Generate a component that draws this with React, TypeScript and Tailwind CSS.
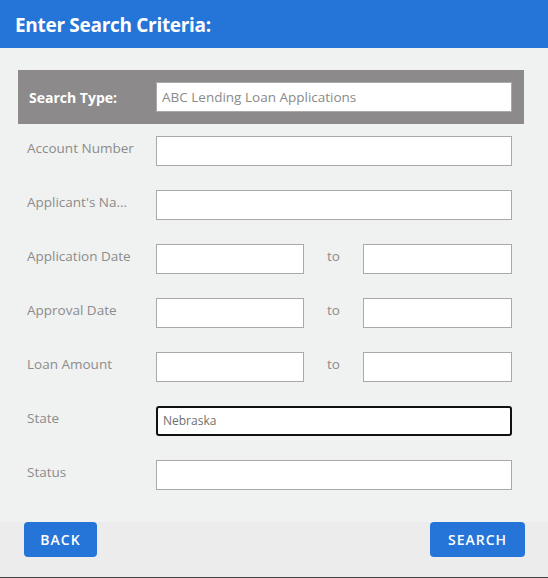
export default function App() {
  const font = { fontFamily: '"Open Sans", "Liberation Sans", sans-serif' }

  const Field = ({ value = '', focused = false, className = '' }: { value?: string; focused?: boolean; className?: string }) => (
    <div
      className={`h-[30px] bg-white flex items-center px-[5px] text-[12px] text-[#6f6f6f] ${
        focused ? 'border-2 border-[#111] rounded-[3px]' : 'border border-[#a9a9a9]'
      } ${className}`}
    >
      {value}
    </div>
  )

  const Label = ({ children }: { children: React.ReactNode }) => (
    <div className="w-[138px] pl-[9px] pr-[8px] pt-[2px] text-[13.5px] leading-[20px] text-[#8c8c8c] truncate">{children}</div>
  )

  const rows: Array<{ label: string; range?: boolean; value?: string; focused?: boolean }> = [
    { label: 'Account Number' },
    { label: "Applicant's Na..." },
    { label: 'Application Date', range: true },
    { label: 'Approval Date', range: true },
    { label: 'Loan Amount', range: true },
    { label: 'State', value: 'Nebraska', focused: true },
    { label: 'Status' },
  ]

  return (
    <div className="w-[548px] h-[578px] flex flex-col bg-[#f0f1f1]" style={font}>
      {/* Header */}
      <div className="h-[48px] bg-[#2574d8] flex items-center px-[15px] pt-[2px]">
        <h1 className="text-[19px] font-bold text-white tracking-[-0.3px]">Enter Search Criteria:</h1>
      </div>

      {/* Body */}
      <div className="flex-1 pt-[22px] px-[18px]">
        <div className="w-[506px] h-[54px] bg-[#8c8a8a] flex items-center pl-[11px]">
          <div className="w-[127px] text-[14px] font-bold text-white">Search Type:</div>
          <div className="w-[356px] h-[30px] bg-white border border-[#a9a9a9] flex items-center px-[5px] text-[13.5px] text-[#8a8a8a]">
            ABC Lending Loan Applications
          </div>
        </div>

        <div className="mt-[12px] flex flex-col gap-[24px]">
          {rows.map((row) => (
            <div key={row.label} className="flex items-start h-[30px]">
              <Label>{row.label}</Label>
              {row.range ? (
                <div className="flex items-start">
                  <Field className="w-[148px]" />
                  <div className="w-[59px] pl-[23px] pt-[2px] text-[13.5px] leading-[20px] text-[#8c8c8c]">to</div>
                  <Field className="w-[149px]" />
                </div>
              ) : (
                <Field className="w-[356px]" value={row.value} focused={row.focused} />
              )}
            </div>
          ))}
        </div>
      </div>

      {/* Footer */}
      <div className="h-[56px] bg-[#ececec] border-b border-[#444] flex justify-between items-start pl-[24px] pr-[23px]">
        <button className="h-[35px] w-[73px] bg-[#2574d8] rounded-[4px] text-white text-[14px] font-semibold tracking-[1px]">
          BACK
        </button>
        <button className="h-[35px] w-[95px] bg-[#2574d8] rounded-[4px] text-white text-[14px] font-semibold tracking-[1px]">
          SEARCH
        </button>
      </div>
    </div>
  )
}
